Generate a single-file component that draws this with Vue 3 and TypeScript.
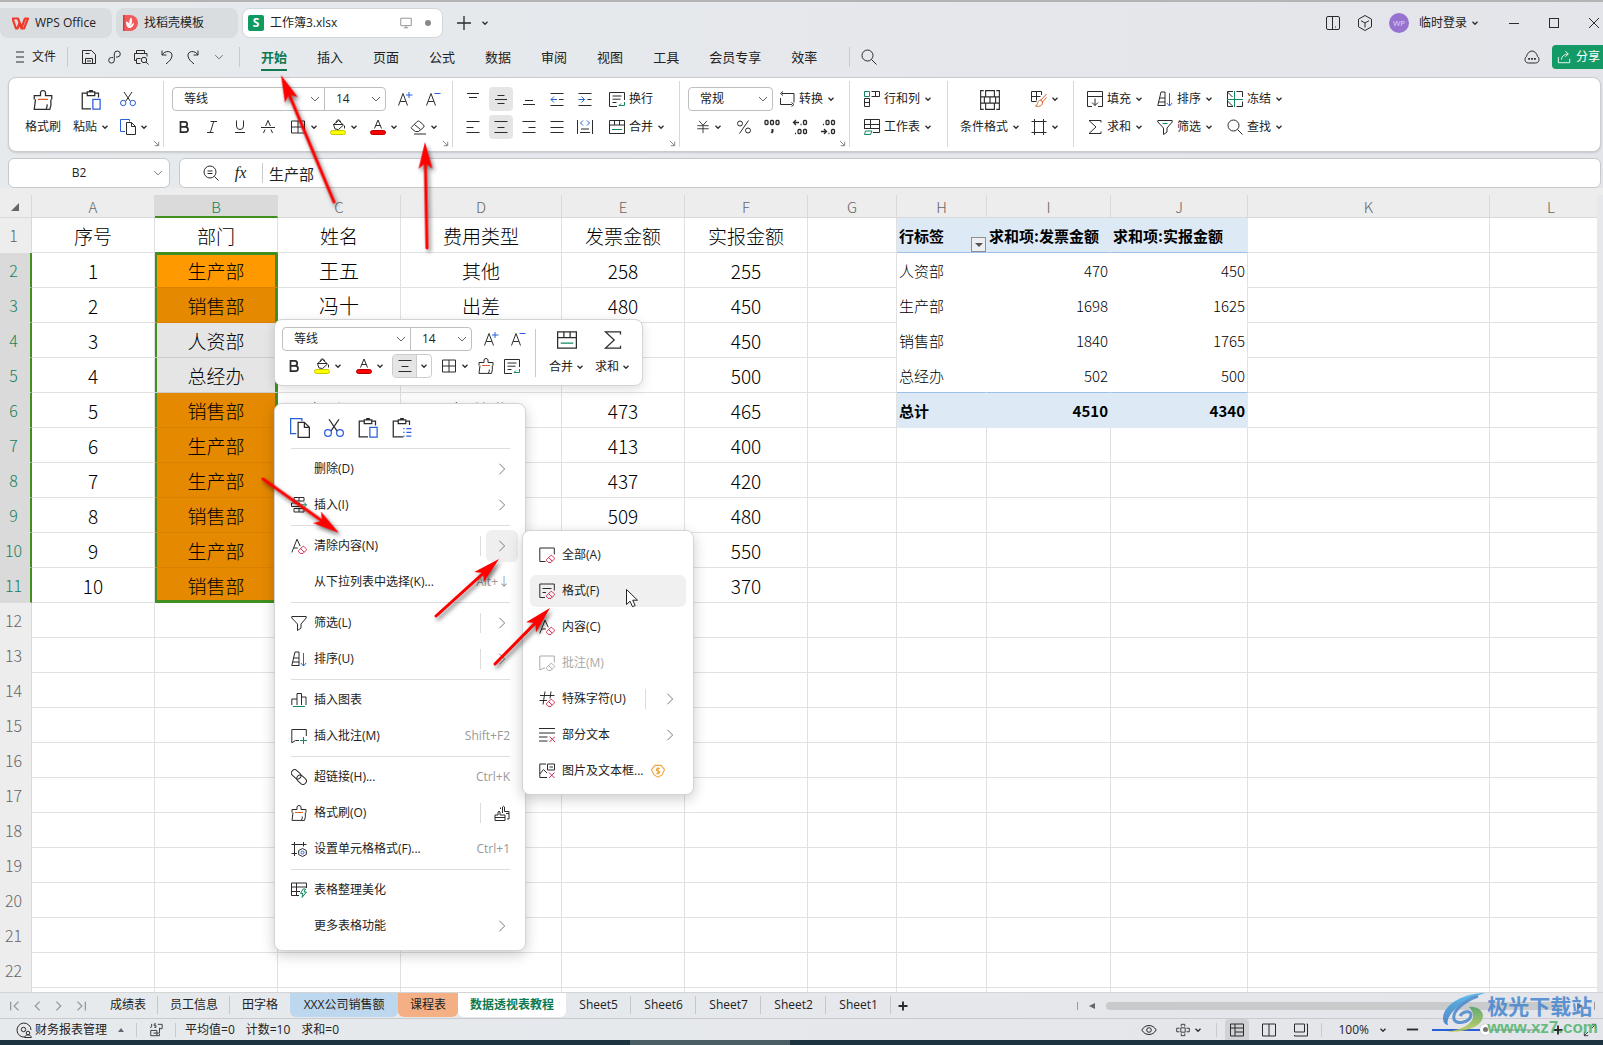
<script setup lang="ts">
import { h, ref } from 'vue'

const BLUE = '#2b5fd9'
const GREEN = '#0f8a5f'
const RED = '#d22c52'
const eraser = (c: string) =>
  `<path stroke="${c}" d="M7.500 12.700 11.500 8.700q.8-.8 1.600 0l2 2q.8.800 0 1.600L12 15.400H9.200L7.500 13.700zM9.700 10.700l3.400 3.300"/>`
const letterA = '<path d="M.8 14.500 6 1.200l3.200 7M2.800 10h4"/>'

const icons: Record<string, string> = {
  menu: '<path d="M4 3h8M4 8h8M4 13h8"/>',
  save: '<path d="M1.500 1.500h9l4 4v9h-13zM4.500 14.500v-5h7v5M4.500 4.500h4M6 12h4"/>',
  swirl: '<path d="M6 8.500H4.500a2.800 2.800 0 1 0 2.800 2.800V4.800A3 3 0 1 1 10.500 8H9"/>',
  print: '<path d="M3.500 4.500v-3h8v3M3 11.500H1.500v-7h12.500v3M3.500 10v4.500h4M3.500 9.500h4"/><circle cx="11" cy="11" r="2.700"/><path d="m13 13 2.500 2.500"/>',
  undo: '<path d="M3 1.500v4.500h4.500M3 6c3-5 10.500-4.500 10 1-.3 3-3 5.500-6 8"/>',
  redo: '<path d="M13 1.500v4.500H8.500M13 6c-3-5-10.500-4.500-10 1 .3 3 3 5.500 6 8"/>',
  search: '<circle cx="6.500" cy="6.500" r="5.500"/><path d="m10.500 10.500 5 5"/>',
  zoomout: '<circle cx="7" cy="7" r="6"/><path d="m11.500 11.500 4 4M4.500 6h5M4.500 8.500h5"/>',
  panel: '<rect x="1.500" y="1.500" width="13" height="13" rx="1.500"/><path d="M7.500 1.500v13M10.500 11.500v1"/>',
  cube: '<path d="m8 .5 6.500 3.700v7.600L8 15.500l-6.500-3.700V4.200zM4 5.700l4 2.300 4-2.300M8 8v4.500"/>',
  minimize: '<path d="M3 8.500h10"/>',
  maximize: '<rect x="3.500" y="3.500" width="9" height="9"/>',
  close: '<path d="m3 3 10 10M13 3 3 13"/>',
  cloud: '<path d="M4.500 14C.5 14 0 9 2.500 7.500 3 4.500 5.500 2 8 2s5 2.500 5.500 5.500C16 9 15.500 14 11.500 14z"/><path stroke-width="1.800" d="M4.200 9.800H6M7.100 9.800h1.800M10 9.800h1.800"/>',
  share: '<path d="M1.500 8v6.500h13V10M5 11c.5-4 3-6 7.500-6.500M9.500 1.500l3.500 3-3.500 3.200"/>',
  brush: '<path d="M1 7.500V4.500h5V2q.3-1.500 2-1.500t2 1.500v2.500h5v3M2 7.500 1 15.400h12.500q1.300-3 .8-7.900M10.500 15q1-1.500.8-3.500"/><path stroke="#d9622b" d="M4 7.500h8"/>',
  paste: '<path d="M5 2.500H1v12.500H8M11 2.500h3v3.500M5 1.500h6v3H5zM7 1.500V.5h2v1"/><rect stroke="#2b5fd9" x="9.500" y="7.500" width="5.800" height="7.800"/>',
  pastelist: `<path d="M5 2.500H1v12.500H9M11 2.500h3v3M5 1.500h6v3H5zM7 1.500V.5h2v1"/><path stroke="${BLUE}" d="M9 8.500h1M11.500 8.500h4M9 11.500h1M11.500 11.500h4M9 14.500h1M11.500 14.500h4"/>`,
  cut: `<path d="M4 1 10.500 10.500M12 1 5.500 10.500"/><g stroke="${BLUE}"><circle cx="3.200" cy="12" r="2.700"/><circle cx="12.800" cy="12" r="2.700"/></g>`,
  copy: `<path stroke="${BLUE}" d="M5 12.500H.5V.5h9v2"/><path d="M6.500 3.500h5l4 4v8h-9zM11.500 3.500v4h4"/>`,
  fontup: `<path d="m1.500 14.500 4.500-12 4.500 12M3.200 10.500h5.600"/><path stroke="${BLUE}" d="M12 1v6M9 4h6.500"/>`,
  fontdown: `<path d="m1.500 14.500 4.500-12 4.500 12M3.200 10.500h5.600"/><path stroke="${BLUE}" d="M9.500 2.500h6"/>`,
  bold: '<path stroke-width="1.700" d="M4.500 2.800h4.200a2.500 2.500 0 0 1 0 5H4.500zM4.500 7.800h4.800a2.700 2.700 0 0 1 0 5.400H4.500z"/>',
  italic: '<path d="M6.500 2.500h6.500M3 13.500h6.500M9.700 2.500l-3.400 11"/>',
  underline: '<path d="M4.500 1.500v5.500a3.500 3.500 0 0 0 7 0V1.500M3 13.500h10"/>',
  strike: '<path d="M1 8.500h14M5.600 7 8 1.500 10.400 7M3.500 14l1.500-3.500M12.500 14 11 10.500"/>',
  borders: '<path d="M1.500 2h13v12h-13zM8 2v12M1.500 8h13"/>',
  fill: '<path d="m3.500 5.500 5-4 5 4.500-5 4.500-3.500-.5zM3.500 5.500h9.500M6.500 4c-1-3.500 3.500-4.500 4-1"/><path d="M14.500 6.500v3"/><rect x=".5" y="11.500" width="15" height="4" rx="2" fill="#ffff00" stroke="#c9c900"/>',
  fontcolor: '<path d="m4.500 9.500 3.500-8.500 3.500 8.500M5.700 6.500h4.600"/><rect x=".5" y="11.500" width="15" height="4" rx="2" fill="#f00" stroke="#b80000"/>',
  eraser: '<path d="m1.200 8.500 6-6q1.200-1 2.400 0l4 3.500q1 1.200 0 2.400L8.500 12.500H5.500l-4-3zM4.500 5.500l6 5M4 15h12"/>',
  altop: '<path d="M2 2.500h12M4 6.500h8"/>',
  almid: '<path d="M4.500 4.500h7M2 8.500h12M4.500 12.500h7"/>',
  albot: '<path d="M4 9.500h8M2 13.500h12"/>',
  outdent: `<path d="M1.500 2.500h13M10 8.500h4.500M1.500 14.500h13"/><path stroke="${BLUE}" d="M8 8.500H2M5 5.500 2 8.500l3 3"/>`,
  indent: `<path d="M1.500 2.500h13M10.500 8.500h4M1.500 14.500h13"/><path stroke="${BLUE}" d="M1.500 8.500h6M4.500 5.500l3 3-3 3"/>`,
  alleft: '<path d="M1.500 2.500h13M1.500 8.500h7M1.500 13.500h13"/>',
  alcenter: '<path d="M1.500 2.500h13M4.500 8.500h7M1.500 13.500h13"/>',
  alright: '<path d="M1.500 2.500h13M7.500 8.500h7M1.500 13.500h13"/>',
  aljust: '<path d="M1.500 2.500h13M1.500 8.500h13M1.500 13.500h13"/>',
  distrib: `<path d="M.5 1v14M15.500 1v14M4 10h8M3 13.500h10"/><path stroke="${BLUE}" d="M6 1.500 3.500 4 6 6.500M10 1.500 12.500 4 10 6.500"/>`,
  wrap: `<path d="M8 15.500H.5V1.500h15V9M3.500 5h9M3.500 8.200h8M3.500 11.500h4"/><path stroke="${GREEN}" d="M15.500 11v3.500H10M12 12.500l-2 2"/>`,
  merge: `<path d="M.5 1.500h15v13H.5zM.5 6h15M5.500 1.500V6M10.500 1.500V6"/><path stroke="${GREEN}" d="M3 10.500h10"/>`,
  convert: '<path d="M3 2.500h12v9M4 .5l-2.500 2L4 4.500M13 13.500H1.500V7M12.500 11.500l2.500 2-2.500 2"/>',
  yen: '<path d="M3.500 1 8 6l4.500-5M1.500 6.500h13M1.500 10h13M8 6v9"/>',
  percent: '<circle cx="4" cy="4.500" r="2.500"/><circle cx="12" cy="11.500" r="2.500"/><path d="M12.500 1.500 3.500 14.500"/>',
  comma: '<g stroke-width="1.300"><rect x="1" y="1.500" width="3" height="4" rx="1"/><rect x="6.500" y="1.500" width="3" height="4" rx="1"/><rect x="12" y="1.500" width="3" height="4" rx="1"/><path stroke-width="2" d="M8.500 10v2.500L7.500 14"/></g>',
  decup: '<g stroke-width="1.300"><path d="M7 3.500H1.500M4 1 1.500 3.500 4 6M8.500 5.500h1M3 14.500h1"/><rect x="11.500" y="1.500" width="3" height="4" rx="1"/><rect x="6" y="10.500" width="3" height="4" rx="1"/><rect x="11.500" y="10.500" width="3" height="4" rx="1"/></g>',
  decdown: '<g stroke-width="1.300"><path d="M1 12.500h5.500M4 10l2.500 2.500L4 15M3 5.500h1M8.500 14.500h1"/><rect x="6" y="1.500" width="3" height="4" rx="1"/><rect x="11.500" y="1.500" width="3" height="4" rx="1"/><rect x="11.500" y="10.500" width="3" height="4" rx="1"/></g>',
  rowscols: `<path d="M7.500.5h8v5h-8M11.500.5v5M.5 7.500h5v8h-5zM.5 11.500h5"/><path stroke="${GREEN}" d="M.5.5h5v5h-5z"/>`,
  worksheet: `<path d="M9 13.500h6.500V.5H.5V10M.5 5.500h15M6.500.5V10M.5 9.500h15"/><path stroke="${GREEN}" d="M1.500 12h6.500l-1.500 3.500H.5z"/>`,
  cond: '<path stroke-width=".9" d="M3 .5H.5v15H3M13 .5h2.500v15H13M.5 5.500h2.500M.5 10.500H3M13 5.500h2.500M13 10.500h2.500M4.500.5h7v5h-7zM4.500 10.500h7v5h-7zM3.500 5.500h9v5h-9zM8 5.500v5"/>',
  tblstyle: '<path d="M5.500 10.500h-5V.5h10v3.500M.5 5.500h9M5.500.5v9"/><path stroke="#d9622b" d="m15.500 3-6 6.500M15.500 6.500l-4.500 5M10 9c-4 0-2.500 4.500-5.500 6 4 1 7.500-.5 7-4z"/>',
  frame: '<path d="M3.500 0v16M12.500 0v16M.5 2.500h15M.5 13.500h15"/>',
  filldown: '<path d="M5 15.500H.5V.5h15v15H11M.5 5.500h15M8 7.500v7M5 11.500l3 3 3-3"/>',
  sort: `<path d="M4 1h4v14M4 1 .8 14.500H8M2.500 7H8M1.600 11H8"/><path stroke="${BLUE}" d="M12.500 2v13M9.800 12l2.700 3 2.700-3"/>`,
  freeze: `<path d="M6 .5H.5v15H6M9.500.5h6v5.500M15.500 10.500v5h-6M.5 1l5 5M.5 10l5 5"/><path stroke="${GREEN}" d="M7.500 0v16M0 8.500h16"/>`,
  sum: '<path d="M14 3.500v-2H2L9 8l-7 6.500h12v-2"/>',
  filter: '<path d="M.8 1.500h14.400v1.500L10 9v4l-3.500 2.500V9L.8 3z"/>',
  filterg: `<path d="M.8 1.500h14.400v1.500L10 9v4l-3.500 2.500V9L.8 3z"/><path stroke="${GREEN}" d="M5.500 4.500h5"/>`,
  chev: '<path stroke-width="2.600" d="m3 5.500 5 5 5-5"/>',
  thin: '<path d="m2 5 6 6 6-6"/>',
  right: '<path stroke="#666" d="m5 2 6 6-6 6"/>',
  launcher: '<path stroke="#777" stroke-width="2" d="m2 2 10 10M13 4v9H4"/>',
  insert: `<path d="M3 .5h10v3.500H3zM.5 6h8v3.500h-8zM3 11.500h10V15H3zM8 .5V4M8 11.500V15"/><path stroke="${GREEN}" d="M10 7.800h5.500M13 5.300l2.500 2.500-2.500 2.500"/>`,
  clear: letterA + eraser(RED),
  chart: `<path d="M.8 13V7H6V13M6 7V1.500h4.500V13M10.500 5H15V13"/><path stroke="${GREEN}" d="M2 14.500h12"/>`,
  note: `<path d="M8 12.500H4.500L.8 14.800V1.500h14.500v6.500"/><path stroke="${GREEN}" d="M12.500 9v7M9 12.500h7"/>`,
  link: '<rect x="0" y="2.500" width="10.500" height="6.500" rx="3.200" transform="rotate(42 5.700 5.500)"/><rect x="5.500" y="7.500" width="10.500" height="6.500" rx="3.200" transform="rotate(42 10.700 10.500)"/>',
  multi: '<path d="M1 15.500V10H4V7q1-1.500 2 0v3h5v5.500zM1 12.500h10M8.500 8V2q1-1.500 2 0v4.500h4.500v7.500H13M12 8.500h3M6.500 4V2.500"/>',
  cellfmt: `<path d="M3.500 1v14M.5 3.500h15M12.500 1v4.500M.5 12.500H6"/><path d="m11.500 7.500 3.800 2v4l-3.800 2-3.800-2v-4z"/><circle cx="11.500" cy="11.500" r="1.500" stroke="${BLUE}"/>`,
  beautify: `<path d="M8 13.500H.5V1h15v5M.5 5h15M.5 9.500H9M5.500 1v12.500"/><path stroke="${GREEN}" d="M12 7 9.500 11.500h2.500l-1 4 4.500-5.500h-2.500l1.500-3z"/>`,
  clrall: '<path d="M6.500 14.500H.8V1h14.500v6.500"/>' + eraser(RED),
  clrfmt: '<path d="M6 14.500H.8V1h14.500v6.500M3.500 5.500h9M3.500 9.500h3.500"/>' + eraser(RED),
  clrnote: '<path stroke="#aaa" d="M6 13H5L.8 15V1h14.500v6.500"/>' + eraser('#aaa'),
  clrhash: '<path d="M6 .5 4 13.500M12 .5l-1 7M1 4.500h14.500M.5 9.500H8"/>' + eraser(RED),
  clrtext: `<path d="M0 1.500h16M0 6h16M0 10h8.500M0 14h8.500"/><path stroke="${RED}" d="m10.500 9.500 5.500 5.500M16 9.500 10.500 15"/>`,
  clrpic: `<path d="M8 14.500H.8V1H7M.8 11l3.700-4.500 3.500 3.500M8.500 1h7v6h-7zM10.500 4h3.500"/><path stroke="${RED}" d="m10 9.500 5.500 5.500M15.500 9.500 10 15"/>`,
  coin: '<path stroke="#f0a63c" stroke-width="1.300" d="M4.500 1.500h7l4 5-3 6L8 15l-4.500-2.500-3-6zM10 5H7L6 7l4 2-1 1.800H6M8 4v8"/>',
  first: '<path stroke="#999" stroke-width="1.500" d="M3 3v10M12 3 7 8l5 5"/>',
  prev: '<path stroke="#999" stroke-width="1.500" d="m11 3-5 5 5 5"/>',
  next: '<path stroke="#999" stroke-width="1.500" d="m5 3 5 5-5 5"/>',
  last: '<path stroke="#999" stroke-width="1.500" d="M13 3v10M4 3l5 5-5 5"/>',
  plus: '<path stroke-width="1.500" d="M8 0v16M0 8h16"/>',
  plusb: '<path stroke-width="2.500" d="M8 2v12M2 8h12"/>',
  minusb: '<path stroke-width="2" d="M2 8h12"/>',
  finance: '<path d="M9 15A7 7 0 1 1 15 8"/><circle cx="7.500" cy="7.500" r="2.200"/><circle cx="12" cy="11" r="1.800"/><path d="M8.800 15.500c0-3.500 6.500-3.500 6.500 0z"/>',
  js: '<path d="M3 1v3.500q-1 1.500-2 0M8 1H6v2h2v2H6M10 1.500h5v5h-3M2 8.500h7v6H2zM5 11.500h7v-6M9 14.500h3v-2"/>',
  eye: '<path d="M.8 8C4 2 12 2 15.200 8 12 14 4 14 .8 8z"/><circle cx="8" cy="8" r="2.300"/>',
  focus: '<path d="M6 4V1.500h4V4M6 12v2.500h4V12M4 6H.8v4H4M12 6h3.200v4H12M5.500 5.500h5v5h-5z"/>',
  vnormal: '<path d="M1.500 2h13v12h-13zM1.500 6h13M6 2v12M6 10h8"/>',
  vpage: '<path d="M1.500 2h13v12h-13zM8 2v12"/>',
  vbreak: '<path d="M1.500 2h10v8h-10zM13.500 2h1v12h-13v-1"/>',
  full: '<path d="M10 1.500h4.500V6M14.500 1.500 10 6M6 14.500H1.500V10M1.500 14.500 6 10"/>',
  monitor: '<path stroke="#888" d="M2 2.500h12v8.500H2zM5.500 13.500h5M8 11v2.500"/>',
}

const Icon = (p: { n: string; s?: number }) =>
  h('svg', {
    class: 'icon',
    viewBox: '0 0 16 16',
    width: p.s ?? 16,
    height: p.s ?? 16,
    'aria-hidden': 'true',
    innerHTML: icons[p.n],
  })
Icon.props = ['n', 's']

const menus = ['开始', '插入', '页面', '公式', '数据', '审阅', '视图', '工具', '会员专享', '效率']
const quick = ['save', 'swirl', 'print', 'undo', 'redo', 'thin']
const fontName = ref('等线')
const fontSize = ref('14')
const numFmt = ref('常规')
const cellRef = ref('B2')
const formula = ref('生产部')
const zoom = ref(49)

const cols = [
  { id: 'A', w: 123 }, { id: 'B', w: 123 }, { id: 'C', w: 123 }, { id: 'D', w: 161 },
  { id: 'E', w: 123 }, { id: 'F', w: 123 }, { id: 'G', w: 89 }, { id: 'H', w: 90 },
  { id: 'I', w: 124 }, { id: 'J', w: 137 }, { id: 'K', w: 242 }, { id: 'L', w: 0 },
]
const data: string[][] = [
  ['序号', '部门', '姓名', '费用类型', '发票金额', '实报金额', '', '行标签', '求和项:发票金额', '求和项:实报金额'],
  ['1', '生产部', '王五', '其他', '258', '255', '', '人资部', '470', '450'],
  ['2', '销售部', '冯十', '出差', '480', '450', '', '生产部', '1698', '1625'],
  ['3', '人资部', '', '', '', '450', '', '销售部', '1840', '1765'],
  ['4', '总经办', '', '', '', '500', '', '总经办', '502', '500'],
  ['5', '销售部', '杨小罗', '招待费', '473', '465', '', '总计', '4510', '4340'],
  ['6', '生产部', '', '', '413', '400'],
  ['7', '生产部', '', '', '437', '420'],
  ['8', '销售部', '', '', '509', '480'],
  ['9', '生产部', '', '', '', '550'],
  ['10', '销售部', '', '', '', '370'],
]
const cellClass = (r: number, c: number) => {
  const k: string[] = []
  if (c === 1 && r >= 2 && r <= 11) {
    k.push('sel')
    if (r === 2) k.push('active')
    else if (r === 4 || r === 5) k.push('grey')
    if (r === 11) k.push('end')
  }
  if (c === 1 && r === 1) k.push('above')
  if (c === 2 && (r === 2 || r === 3)) k.push('light')
  if (c >= 7 && c <= 9 && r <= 6) {
    k.push('pivot')
    if (r === 1 || r === 6) k.push('band')
    if (r === 1 || r === 5) k.push('rule')
    if (c > 7 && r > 1) k.push('num')
    if (c === 9 && r !== 1 && r !== 6) k.push('edge')
  }
  if (c === 6 && r <= 6) k.push('edge')
  return k
}

interface Item { t?: string; i?: string; key?: string; arrow?: boolean; split?: boolean; hot?: boolean; multi?: boolean; off?: boolean; coin?: boolean }
const menuItems: Item[] = [
  {},
  { t: '删除(D)', arrow: true },
  { t: '插入(I)', i: 'insert', arrow: true },
  {},
  { t: '清除内容(N)', i: 'clear', arrow: true, split: true, hot: true },
  { t: '从下拉列表中选择(K)...', key: 'Alt+↓' },
  {},
  { t: '筛选(L)', i: 'filter', arrow: true, split: true },
  { t: '排序(U)', i: 'sort', arrow: true, split: true },
  {},
  { t: '插入图表', i: 'chart' },
  { t: '插入批注(M)', i: 'note', key: 'Shift+F2' },
  {},
  { t: '超链接(H)...', i: 'link', key: 'Ctrl+K' },
  { t: '格式刷(O)', i: 'brush', split: true, multi: true },
  { t: '设置单元格格式(F)...', i: 'cellfmt', key: 'Ctrl+1' },
  {},
  { t: '表格整理美化', i: 'beautify' },
  { t: '更多表格功能', arrow: true },
]
const subItems: Item[] = [
  { t: '全部(A)', i: 'clrall' },
  { t: '格式(F)', i: 'clrfmt', hot: true },
  { t: '内容(C)', i: 'clear' },
  { t: '批注(M)', i: 'clrnote', off: true },
  { t: '特殊字符(U)', i: 'clrhash', arrow: true, split: true },
  { t: '部分文本', i: 'clrtext', arrow: true },
  { t: '图片及文本框...', i: 'clrpic', coin: true },
]
const sheets = [
  { t: '成绩表' }, { t: '员工信息' }, { t: '田字格', k: 'plain' }, { t: 'XXX公司销售额', k: 'blue' },
  { t: '课程表', k: 'orange' }, { t: '数据透视表教程', k: 'current' },
  { t: 'Sheet5' }, { t: 'Sheet6' }, { t: 'Sheet7' }, { t: 'Sheet2' }, { t: 'Sheet1' },
]

// Callout arrows: tail point, then tip point
const arrows = [
  [334, 202, 281, 75],
  [427, 248, 425, 142],
  [263, 479, 339, 533],
  [436, 616, 499, 559],
  [495, 664, 550, 608],
].map(([x1, y1, x2, y2]) => ({
  len: Math.hypot(x2 - x1, y2 - y1),
  at: `translate(${x2} ${y2}) rotate(${(Math.atan2(y2 - y1, x2 - x1) * 180) / Math.PI})`,
}))
</script>

<template>
  <div class="app">
    <header class="titlebar">
      <button class="doc home">
        <svg width="17" height="13" viewBox="0 0 17 13"><path fill="none" stroke="#ee3a2c" stroke-width="2.200" stroke-linejoin="round" d="M.5 1.500H6l3.500 9L13 1.500h3L12 11.500H9.500L7.500 6 5.500 11.500H4z" /></svg>
        WPS Office
      </button>
      <button class="doc template">
        <svg width="16" height="16" viewBox="0 0 16 16"><path fill="#f05a5a" d="M1 0h7a7 7 0 0 1 0 16H1z" /><path fill="#d93a3a" d="M1 0h1.500v16H1z" /><path fill="#fff" d="M9 2.500c2 3 1 6-.5 8C6.500 9 7 5 9 2.500zM4 6.500c2.500.5 3.500 2 4 4.500l4-3.500c0 3-2 5.500-4.500 5.500S4 9.500 4 6.500z" /></svg>
        找稻壳模板
      </button>
      <button class="doc current-doc">
        <span class="sheet-logo">S</span>
        工作簿3.xlsx
        <span class="doc-tail"><Icon n="monitor" :s="14" /><i class="dot"></i></span>
      </button>
      <button class="bare add" aria-label="新建"><Icon n="plus" :s="14" /></button>
      <button class="bare" aria-label="更多"><Icon n="chev" :s="8" /></button>
      <div class="window-tools">
        <button class="bare" aria-label="侧栏"><Icon n="panel" /></button>
        <button class="bare" aria-label="应用"><Icon n="cube" /></button>
        <button class="bare account"><span class="avatar">WP</span>临时登录<Icon n="chev" :s="8" /></button>
        <button class="bare win" aria-label="最小化"><Icon n="minimize" /></button>
        <button class="bare win" aria-label="最大化"><Icon n="maximize" /></button>
        <button class="bare win" aria-label="关闭"><Icon n="close" /></button>
      </div>
    </header>

    <nav class="menubar">
      <button class="bare file"><Icon n="menu" />文件</button>
      <i class="bar"></i>
      <div class="quick">
        <button v-for="q in quick" :key="q" class="bare" :aria-label="q"><Icon :n="q" :s="q === 'thin' ? 10 : 16" /></button>
      </div>
      <i class="bar"></i>
      <div class="tabs">
        <button v-for="(m, i) in menus" :key="m" class="bare tab" :class="{ on: i === 0 }">{{ m }}</button>
      </div>
      <i class="bar far"></i>
      <button class="bare find" aria-label="搜索"><Icon n="search" /></button>
      <div class="share-box">
        <button class="bare" aria-label="云"><Icon n="cloud" /></button>
        <button class="share"><Icon n="share" :s="14" />分享</button>
      </div>
    </nav>

    <section class="ribbon">
      <div class="group clip">
        <button class="tall"><Icon n="brush" :s="20" /><span>格式刷</span></button>
        <button class="tall"><Icon n="paste" :s="20" /><span>粘贴<Icon n="chev" :s="8" /></span></button>
        <div class="rows">
          <div class="row"><button class="ib" aria-label="剪切"><Icon n="cut" /></button></div>
          <div class="row"><button class="split" aria-label="复制"><Icon n="copy" /><Icon n="chev" :s="8" /></button></div>
        </div>
        <Icon n="launcher" :s="7" class="launch" />
      </div>
      <div class="group font">
        <div class="rows">
          <div class="row">
            <div class="combo">
              <select v-model="fontName" class="fname" aria-label="字体"><option>等线</option></select>
              <select v-model="fontSize" class="fsize" aria-label="字号"><option>14</option></select>
            </div>
            <button class="ib push" aria-label="增大字号"><Icon n="fontup" /></button>
            <button class="ib" aria-label="减小字号"><Icon n="fontdown" /></button>
          </div>
          <div class="row">
            <button v-for="n in ['bold', 'italic', 'underline', 'strike']" :key="n" class="ib" :aria-label="n"><Icon :n="n" /></button>
            <button v-for="n in ['borders', 'fill', 'fontcolor', 'eraser']" :key="n" class="split" :aria-label="n"><Icon :n="n" /><Icon n="chev" :s="8" /></button>
          </div>
        </div>
        <Icon n="launcher" :s="7" class="launch" />
      </div>
      <div class="group align">
        <div class="rows">
          <div class="row">
            <button v-for="n in ['altop', 'almid', 'albot', 'outdent', 'indent']" :key="n" class="ib" :class="{ pressed: n === 'almid' }" :aria-label="n"><Icon :n="n" /></button>
            <button class="lab wide"><Icon n="wrap" />换行</button>
          </div>
          <div class="row">
            <button v-for="n in ['alleft', 'alcenter', 'alright', 'aljust', 'distrib']" :key="n" class="ib" :class="{ pressed: n === 'alcenter' }" :aria-label="n"><Icon :n="n" /></button>
            <button class="lab wide"><Icon n="merge" />合并<Icon n="chev" :s="8" /></button>
          </div>
        </div>
        <Icon n="launcher" :s="7" class="launch" />
      </div>
      <div class="group number">
        <div class="rows">
          <div class="row">
            <div class="combo"><select v-model="numFmt" class="nfmt" aria-label="数字格式"><option>常规</option></select></div>
            <button class="lab wide"><Icon n="convert" />转换<Icon n="chev" :s="8" /></button>
          </div>
          <div class="row">
            <button class="split yen" aria-label="货币"><Icon n="yen" :s="14" /><Icon n="chev" :s="8" /></button>
            <button v-for="n in ['percent', 'comma', 'decup', 'decdown']" :key="n" class="ib" :aria-label="n"><Icon :n="n" /></button>
          </div>
        </div>
        <Icon n="launcher" :s="7" class="launch" />
      </div>
      <div class="group sheet">
        <div class="rows">
          <div class="row"><button class="lab"><Icon n="rowscols" />行和列<Icon n="chev" :s="8" /></button></div>
          <div class="row"><button class="lab"><Icon n="worksheet" />工作表<Icon n="chev" :s="8" /></button></div>
        </div>
      </div>
      <div class="group style">
        <button class="tall"><Icon n="cond" :s="20" /><span>条件格式<Icon n="chev" :s="8" /></span></button>
        <div class="rows">
          <div class="row"><button class="split" aria-label="表格样式"><Icon n="tblstyle" /><Icon n="chev" :s="8" /></button></div>
          <div class="row"><button class="split" aria-label="单元格样式"><Icon n="frame" /><Icon n="chev" :s="8" /></button></div>
        </div>
      </div>
      <div class="group edit">
        <div class="rows">
          <div class="row">
            <button class="lab"><Icon n="filldown" />填充<Icon n="chev" :s="8" /></button>
            <button class="lab"><Icon n="sort" />排序<Icon n="chev" :s="8" /></button>
            <button class="lab"><Icon n="freeze" />冻结<Icon n="chev" :s="8" /></button>
          </div>
          <div class="row">
            <button class="lab"><Icon n="sum" />求和<Icon n="chev" :s="8" /></button>
            <button class="lab"><Icon n="filterg" />筛选<Icon n="chev" :s="8" /></button>
            <button class="lab"><Icon n="search" />查找<Icon n="chev" :s="8" /></button>
          </div>
        </div>
      </div>
    </section>

    <section class="formula">
      <div class="field name"><input v-model="cellRef" aria-label="名称框" /><Icon n="thin" :s="10" /></div>
      <div class="field expr">
        <Icon n="zoomout" /><span class="fx">fx</span><i class="bar"></i>
        <input v-model="formula" aria-label="编辑栏" />
      </div>
    </section>

    <main class="grid">
      <table>
        <colgroup>
          <col class="c-head" />
          <col v-for="c in cols" :key="c.id" :style="c.w ? { width: c.w + 'px' } : {}" />
        </colgroup>
        <thead>
          <tr>
            <th class="corner"><svg width="8" height="8" viewBox="0 0 8 8"><path fill="#666" d="M8 0v8H0z" /></svg></th>
            <th v-for="c in cols" :key="c.id" :class="{ picked: c.id === 'B' }">{{ c.id }}</th>
          </tr>
        </thead>
        <tbody>
          <tr v-for="r in 23" :key="r">
            <th :class="{ picked: r >= 2 && r <= 11 }">{{ r <= 22 ? r : '' }}</th>
            <td v-for="(c, ci) in cols" :key="c.id" :class="cellClass(r, ci)">
              {{ data[r - 1]?.[ci] ?? '' }}<button v-if="r === 1 && ci === 7" class="drop" aria-label="筛选行标签"><svg width="8" height="4" viewBox="0 0 8 4"><path fill="#555" d="M0 0h8L4 4z" /></svg></button>
            </td>
          </tr>
        </tbody>
      </table>
      <div class="vscroll"></div>
    </main>

    <footer>
      <div class="sheetbar">
        <div class="nav">
          <button v-for="n in ['first', 'prev', 'next', 'last']" :key="n" class="bare" :aria-label="n"><Icon :n="n" :s="14" /></button>
        </div>
        <button v-for="s in sheets" :key="s.t" class="stab" :class="s.k">{{ s.t }}</button>
        <button class="bare plus" aria-label="新建工作表"><Icon n="plusb" :s="12" /></button>
        <div class="hscroll">
          <i class="tick"></i>
          <svg width="6" height="6" viewBox="0 0 6 6"><path fill="#666" d="M6 0v6L0 3z" /></svg>
          <i class="track"></i>
          <svg width="6" height="6" viewBox="0 0 6 6"><path fill="#666" d="M0 0v6l6-3z" /></svg>
          <i class="tick"></i>
        </div>
      </div>
      <div class="status">
        <button class="bare fin"><Icon n="finance" />财务报表管理<svg width="6" height="4" viewBox="0 0 6 4"><path fill="#667" d="M0 4h6L3 0z" /></svg></button>
        <i class="bar"></i>
        <Icon n="js" :s="14" />
        <i class="bar"></i>
        <span class="stats"><span>平均值=0</span><span>计数=10</span><span>求和=0</span></span>
        <div class="view-tools">
          <button class="bare vb" aria-label="护眼"><Icon n="eye" /></button>
          <button class="bare focus" aria-label="阅读"><Icon n="focus" :s="14" /><Icon n="chev" :s="8" /></button>
          <i class="bar"></i>
          <button class="bare vb chosen" aria-label="普通视图"><Icon n="vnormal" /></button>
          <button class="bare vb" aria-label="页面布局"><Icon n="vpage" /></button>
          <button class="bare vb" aria-label="分页预览"><Icon n="vbreak" /></button>
          <i class="bar"></i>
          <button class="bare pct">100%<Icon n="chev" :s="8" /></button>
          <button class="bare" aria-label="缩小"><Icon n="minusb" :s="15" /></button>
          <input v-model="zoom" type="range" min="0" max="100" aria-label="缩放" />
          <button class="bare" aria-label="放大"><Icon n="plusb" :s="12" /></button>
          <button class="bare fullb" aria-label="全屏"><Icon n="full" :s="14" /></button>
        </div>
      </div>
      <div class="taskbar"><i></i></div>
    </footer>

    <div class="mini">
      <div class="rows">
        <div class="row">
          <div class="combo">
            <select v-model="fontName" class="mname" aria-label="字体"><option>等线</option></select>
            <select v-model="fontSize" class="fsize" aria-label="字号"><option>14</option></select>
          </div>
          <button class="ib push" aria-label="增大字号"><Icon n="fontup" /></button>
          <button class="ib near" aria-label="减小字号"><Icon n="fontdown" /></button>
        </div>
        <div class="row second">
          <button class="ib bold" aria-label="加粗"><Icon n="bold" /></button>
          <button class="split" aria-label="填充颜色"><Icon n="fill" /><Icon n="chev" :s="8" /></button>
          <button class="split" aria-label="字体颜色"><Icon n="fontcolor" /><Icon n="chev" :s="8" /></button>
          <span class="alignbox"><button class="pressed" aria-label="居中"><Icon n="alcenter" /></button><button aria-label="对齐选项"><Icon n="chev" :s="8" /></button></span>
          <button class="split" aria-label="边框"><Icon n="borders" /><Icon n="chev" :s="8" /></button>
          <button class="ib near" aria-label="格式刷"><Icon n="brush" /></button>
          <button class="ib near" aria-label="换行"><Icon n="wrap" /></button>
        </div>
      </div>
      <i class="bar"></i>
      <button class="tall"><Icon n="merge" :s="20" /><span>合并<Icon n="chev" :s="8" /></span></button>
      <button class="tall"><Icon n="sum" :s="20" /><span>求和<Icon n="chev" :s="8" /></span></button>
    </div>

    <div class="popup context">
      <div class="clips">
        <button v-for="n in ['copy', 'cut', 'paste', 'pastelist']" :key="n" class="bare" :aria-label="n"><Icon :n="n" :s="20" /></button>
      </div>
      <template v-for="(m, i) in menuItems" :key="i">
        <hr v-if="!m.t" />
        <button v-else class="item">
          <span class="gly"><Icon v-if="m.i" :n="m.i" /></span>
          <span class="txt">{{ m.t }}</span>
          <kbd v-if="m.key">{{ m.key }}</kbd>
          <i v-if="m.split" class="bar"></i>
          <span v-if="m.arrow" class="more" :class="{ hot: m.hot }"><Icon n="right" :s="14" /></span>
          <span v-if="m.multi" class="more"><Icon n="multi" /></span>
        </button>
      </template>
    </div>

    <div class="popup sub">
      <button v-for="m in subItems" :key="m.t" class="item" :class="{ hover: m.hot, off: m.off }">
        <span class="gly"><Icon v-if="m.i" :n="m.i" /></span>
        <span class="txt">{{ m.t }}</span>
        <Icon v-if="m.coin" n="coin" :s="14" />
        <i v-if="m.split" class="bar"></i>
        <span v-if="m.arrow" class="more"><Icon n="right" :s="14" /></span>
      </button>
    </div>

    <svg class="overlay">
      <g class="arrows">
        <g v-for="(a, i) in arrows" :key="i" :transform="a.at">
          <path :d="`M-18 0H${-a.len}`" stroke="#f00" stroke-width="3" stroke-linecap="round" />
          <path d="M0 0-27-7-21 0-27 7z" fill="#f00" />
        </g>
      </g>
      <path class="pointer" transform="translate(626 589)" d="M.5.5v15l3.500-3.300 2.500 5.500 2.700-1.200-2.500-5.300h4.800z" />
    </svg>

    <div class="mark">
      <svg width="44" height="42" viewBox="0 0 44 42">
        <defs>
          <linearGradient id="swoosh" x1="0" y1="0" x2="0" y2="1"><stop offset="0" stop-color="#45b5ea" /><stop offset="1" stop-color="#3b74c4" /></linearGradient>
          <linearGradient id="leaf" x1="0" y1="0" x2="0" y2="1"><stop offset="0" stop-color="#4aa35f" /><stop offset="1" stop-color="#c2cc55" /></linearGradient>
        </defs>
        <path fill="url(#swoosh)" d="M43 1C24 1 2 11 1 26c0 5 3 7 5 7-3-8 9-23 37-32z" />
        <path fill="url(#leaf)" d="M27 15c7-1 14 3 14 9C40 34 27 40 4 40c15-2 28-8 27-17-.4-3-2-6-4-8z" />
        <path fill="none" stroke="#4a86cc" stroke-width="3" d="M36 4C22 9 10 19 12 27c1 6 16 4 17-4 0-5-8-4-11 1" />
      </svg>
      <div class="mark-text"><strong>极光下载站</strong><a href="#">www.xz7.com</a></div>
    </div>
  </div>
</template>

<style>
body { margin: 0; overflow: hidden; }
</style>

<style scoped>
* { box-sizing: border-box; }
.app {
  position: relative; display: flex; flex-direction: column; height: 100vh; overflow: hidden;
  background: linear-gradient(90deg, #e6eaed, #e4e5ea); color: #222;
  font: 12px/16px "Open Sans", "Noto Sans CJK SC", sans-serif;
}
button, input, select { font: inherit; color: inherit; border: 0; padding: 0; margin: 0; background: none; outline: 0; }
.icon { fill: none; stroke: #2b2b2b; stroke-width: 1; flex: none; display: block; }
.bare { display: flex; align-items: center; justify-content: center; white-space: nowrap; }
.bar { width: 1px; height: 20px; background: #c8cacd; flex: none; }

.titlebar { display: flex; align-items: center; height: 44px; border-top: 2px solid #b4b4b4; flex: none; }
.doc { display: flex; align-items: center; height: 30px; border-radius: 8px; background: #dadde0; padding: 0 12px; gap: 6px; margin-right: 4px; white-space: nowrap; }
.home { width: 112px; border-top-left-radius: 0; }
.template { width: 122px; padding: 0 6px; }
.current-doc { width: 201px; background: #fff; padding: 0 5px; border: 1px solid #d3d5d8; margin-right: 0; }
.sheet-logo { width: 16px; height: 16px; background: #0f9a62; color: #fff; border-radius: 2px; font-weight: 700; text-align: center; }
.doc-tail { margin-left: auto; display: flex; align-items: center; gap: 12px; padding-right: 6px; }
.dot { width: 6px; height: 6px; border-radius: 3px; background: #888; }
.add { margin: 0 10px 0 14px; }
.window-tools { margin-left: auto; display: flex; align-items: center; gap: 16px; }
.account { gap: 4px; margin-right: 7px; }
.avatar { width: 20px; height: 20px; border-radius: 10px; background: #9673cf; color: #e0d3f5; font-size: 8px; line-height: 20px; text-align: center; margin-right: 6px; }
.win { width: 24px; }
.win:last-child { width: 16px; margin: 0 1px 0 4px; }

.menubar { display: flex; align-items: center; height: 26px; flex: none; }
.file { margin: 0 11px 0 12px; gap: 4px; }
.quick { display: flex; padding: 0 7px 0 8px; }
.quick .bare { width: 26px; }
.tabs { display: flex; gap: 30px; margin-left: 21px; font-size: 13px; }
.tab { position: relative; height: 26px; }
.tab.on { color: #0f7a50; font-weight: 700; }
.tab.on::after { content: ""; position: absolute; left: 0; right: 0; bottom: -1px; height: 2px; background: #0f7a50; }
.far { margin-left: 32px; }
.find { margin-left: 11px; }
.share-box { margin-left: auto; display: flex; gap: 12px; }
.share { display: flex; align-items: center; gap: 5px; height: 24px; width: 51px; padding-left: 5px; background: #149a66; color: #fff; border-radius: 4px 0 0 4px; white-space: nowrap; }
.share .icon { stroke: #fff; }

.ribbon { display: flex; flex: none; height: 75px; margin: 7px 2px 0 8px; padding-top: 3px; background: #fff; border: 1px solid #c9cbce; border-radius: 8px; box-shadow: 0 1px 2px #0002; }
.group { position: relative; display: flex; height: 66px; padding-top: 6px; border-right: 1px solid #d8d8d8; flex: none; }
.group:last-child { border: 0; }
.rows { display: flex; flex-direction: column; gap: 4px; }
.row { display: flex; align-items: center; height: 24px; }
.ib { display: flex; align-items: center; justify-content: center; width: 28px; height: 24px; }
.pressed { background: #e5e5e5; border-radius: 4px; }
.ib.pressed { width: 24px; margin: 0 2px; }
.split { display: flex; align-items: center; width: 40px; height: 24px; padding-left: 8px; gap: 4px; }
.lab { display: flex; align-items: center; gap: 4px; height: 24px; white-space: nowrap; }
.tall { display: flex; flex-direction: column; align-items: center; white-space: nowrap; }
.tall > .icon { margin: 3px 0 6px; }
.tall > span { display: flex; align-items: center; gap: 4px; line-height: 22px; }
.launch { position: absolute; right: 3px; bottom: 0; }
.combo { display: flex; height: 24px; border: 1px solid #bfbfbf; border-radius: 4px; overflow: hidden; background: #fff; }
.combo select {
  appearance: none; padding: 0 11px; height: 22px;
  background: url("data:image/svg+xml,%3Csvg xmlns='http://www.w3.org/2000/svg' width='10' height='10' fill='none' stroke='%23666'%3E%3Cpath d='m1 3 4 4 4-4'/%3E%3C/svg%3E") no-repeat right 4px center;
}
.fname { width: 152px; border-right: 1px solid #bfbfbf; }
.fsize { width: 60px; background-position: right 5px center; }
.nfmt { width: 83px; }
.mname { width: 128px; border-right: 1px solid #bfbfbf; }
.clip { width: 155px; padding-left: 16px; }
.clip .tall + .tall { margin-left: 12px; }
.clip .rows { margin-left: 3px; }
.clip .ib { padding-left: 4px; }
.font { width: 289px; padding-left: 6px; }
.font .combo { margin-left: 2px; }
.font .push { margin-left: 5px; }
.align { width: 227px; padding-left: 6px; }
.align .lab { margin-left: 10px; }
.number { width: 170px; padding-left: 8px; }
.number .lab { margin-left: 6px; }
.number .yen { width: 42px; }
.sheet { width: 98px; padding-left: 14px; }
.style { width: 126px; padding-left: 12px; }
.style .rows { margin-left: 3px; }
.edit { padding-left: 13px; }
.edit .lab { width: 70px; }

.formula { display: flex; flex: none; gap: 9px; height: 30px; margin: 6px 2px 0 8px; }
.field { display: flex; align-items: center; background: #fff; border: 1px solid #c6c8ca; border-radius: 6px; }
.name { width: 162px; padding-right: 6px; }
.name input { flex: 1; min-width: 0; text-align: center; padding-right: 4px; }
.expr { flex: 1; padding-left: 23px; gap: 12px; }
.expr input { flex: 1; font-size: 15px; margin-left: -6px; height: 24px; }
.fx { font: italic 16px/20px "Liberation Serif", serif; width: 19px; text-align: center; }

.grid { flex: 1 1 0; min-height: 0; overflow: hidden; display: flex; padding-top: 7px; background: #ededed; }
table { flex: none; width: calc(100% + 10px); margin-right: -16px; table-layout: fixed; border-collapse: separate; border-spacing: 0; background: #fff; align-self: flex-start; }
.c-head { width: 32px; }
th { background: #ededed; color: #666; border: solid #d9d9d9; border-width: 0 1px 1px 0; padding: 0; font-family: "Noto Sans CJK SC", sans-serif; font-weight: 300; }
thead th { height: 23px; padding-top: 1px; font-size: 15px; line-height: 18px; }
thead th.picked { background: #dadada; color: #17805a; border-bottom: 2px solid #41901f; padding-top: 2px; }
.corner svg { display: block; margin-left: 11px; }
tbody th { font-size: 16px; padding: 0 4px 0 0; border-bottom-color: #ededed; }
tbody th.picked { background: #dadada; color: #17805a; border-right: 2px solid #41901f; border-bottom-color: #dadada; padding-right: 3px; }
td { position: relative; height: 35px; padding: 1px 0 0; border: solid #e1e1e1; border-width: 0 1px 1px 0; text-align: center; color: #000; font: 300 19px/30px "Noto Sans CJK SC", sans-serif; white-space: nowrap; }
td.light { font-size: 20px; }
td.above { border-bottom-color: #41901f; }
td.sel { background: #e58900; border-bottom-color: #d98200; border-right: 1px solid #41901f; box-shadow: inset 2px 0 #41901f, inset -2px 0 #41901f; }
td.grey { background: #e5e5e5; border-bottom-color: #ccc; }
td.active { background: #f90; box-shadow: inset 2px 0 #41901f, inset -2px 0 #41901f, inset 0 2px #41901f; }
td.end { border-bottom-color: #41901f; box-shadow: inset 2px 0 #41901f, inset -2px 0 #41901f, inset 0 -2px #41901f; }
td.pivot { font-size: 15px; text-align: left; padding: 1px 2px 0; border-color: transparent; }
td.num { text-align: right; }
td.band { background: #ddeaf6; font-weight: 700; border-color: #ddeaf6; }
td.pivot.rule { border-bottom-color: #9bc2e6; }
td.pivot.edge { border-right-color: #e1e1e1; }
.drop { position: absolute; right: 0; bottom: 0; width: 15px; height: 15px; border: 1px solid #8c8f96; background: #eceef2; display: flex; align-items: center; justify-content: center; }
.vscroll { position: relative; width: 6px; flex: none; background: #e6e8eb; }

footer { flex: none; }
.sheetbar { display: flex; align-items: stretch; height: 26px; border-top: 1px solid #d2d4d6; }
.nav { display: flex; align-items: center; width: 98px; padding-left: 8px; gap: 8px; flex: none; }
.stab { position: relative; height: 24px; min-width: 59px; padding: 0 12px; white-space: nowrap; flex: none; }
.stab:not(.plain):not(.blue):not(.orange):not(.current)::after { content: ""; position: absolute; right: 0; top: 3px; height: 18px; width: 1px; background: #c5c8cb; }
.stab.blue { min-width: 108px; background: #bdd7ee; border-radius: 0 0 6px 6px; }
.stab.orange { background: #f4b084; border-radius: 0 0 6px 6px; }
.stab.current { background: #fff; color: #0f7a50; font-weight: 700; border-radius: 0 0 6px 6px; }
.stab.current ~ .stab { min-width: 65px; }
.plus { width: 24px; margin-right: auto; }
.hscroll { display: flex; align-items: center; gap: 11px; width: 526px; padding-right: 8px; }
.tick { width: 1px; height: 8px; background: #999; }
.track { flex: 1; height: 8px; border-radius: 4px; background: #c9cacc; }
.status { display: flex; align-items: center; height: 22px; border-top: 1px solid #c8cacd; padding-left: 16px; gap: 12px; }
.status .bar { height: 14px; }
.fin { gap: 3px; }
.fin svg:last-child { margin-left: 8px; }
.stats { display: flex; gap: 11px; margin-left: -3px; white-space: nowrap; }
.view-tools { margin-left: auto; display: flex; align-items: center; }
.vb { width: 24px; height: 21px; margin-right: 8px; }
.vb.chosen { background: #cfd1d4; border-radius: 4px 4px 0 0; }
.focus { gap: 4px; margin: 0 14px 0 7px; }
.view-tools .bar { margin-right: 8px; }
.view-tools .bar + .pct { margin-left: 8px; }
.pct { gap: 10px; margin-right: 18px; }
.view-tools input { appearance: none; width: 108px; height: 16px; margin: 0 12px; background: linear-gradient(90deg, #2b5fd9 50%, #b5b6bb 50%) center / 100% 2px no-repeat; }
.view-tools input::-webkit-slider-thumb { appearance: none; width: 11px; height: 11px; border-radius: 6px; border: 3px solid #fff; background: #777; box-shadow: 0 0 1px #888; }
.fullb { margin: 0 6px 0 19px; }
.taskbar { height: 5px; background: #1e3340; display: flex; }
.taskbar i { width: 160px; margin-left: 630px; background: #4b5e66; }

.mini { position: absolute; left: 274px; top: 319px; width: 369px; height: 67px; display: flex; padding: 7px; background: #fff; border: 1px solid #d4d4d4; border-radius: 8px; box-shadow: 0 3px 12px #0002; }
.mini .rows { width: 251px; gap: 3px; }
.mini .push { margin-left: 5px; }
.mini .near { width: 26px; }
.mini .bold { width: 24px; }
.mini .split { width: 42px; }
.mini .alignbox + .split { width: 40px; }
.mini .second { margin-right: -8px; }
.alignbox { display: flex; width: 40px; height: 24px; border: 1px solid #ccc; border-radius: 4px; flex: none; margin: 0 1px 0 2px; }
.alignbox button { display: flex; align-items: center; justify-content: center; flex: 1; }
.alignbox .pressed { flex: none; width: 24px; border-right: 1px solid #ccc; border-radius: 4px 0 0 4px; }
.mini .bar { height: 48px; margin: 2px 13px 0 2px; }
.mini .tall > .icon { margin: 3px 0 6px; }
.mini .tall > span { gap: 3px; }
.mini .tall + .tall { margin-left: 11px; }

.popup { position: absolute; background: #fff; border: 1px solid #d4d4d4; border-radius: 8px; box-shadow: 0 4px 14px #0003; padding: 6px 0; }
.context { left: 274px; top: 403px; width: 252px; }
.sub { left: 522px; top: 530px; width: 172px; padding: 5px 7px; }
.clips { display: flex; height: 36px; gap: 14px; padding-left: 15px; }
hr { margin: 2px 15px 2px 16px; border: 0; height: 1px; background: #dedede; }
.item { display: flex; align-items: center; width: 100%; height: 36px; padding: 0 15px 0 16px; white-space: nowrap; text-align: left; }
.gly { width: 23px; flex: none; }
.txt { margin-right: auto; }
kbd { font: inherit; color: #999; }
.item .bar { background: #dcdcdc; }
.more { display: flex; align-items: center; justify-content: center; width: 32px; height: 32px; margin: 0 -8px 0 5px; border-radius: 6px; }
.more.hot { background: #efefef; }
.sub .item { height: 32px; margin: 2px 0; padding: 0 8px 0 9px; border-radius: 6px; }
.sub .item:first-child { margin-top: 3px; }
.sub .item + .item { margin-top: 4px; }
.sub .bar { margin-right: 3px; }
.sub .hover { background: #f0f0f0; }
.sub .off { color: #aaa; }
.sub .item > .icon { margin-right: 13px; }

.overlay { position: absolute; left: 0; top: 0; width: 100%; height: 100%; pointer-events: none; }
.arrows { filter: drop-shadow(2px 3px 2px #0008); }
.pointer { fill: #fff; stroke: #222; }
.mark { position: absolute; right: 5px; bottom: 7px; display: flex; gap: 1px; opacity: .85; }
.mark-text { display: flex; flex-direction: column; white-space: nowrap; }
.mark strong { font: 700 21px/26px "Noto Sans CJK SC", sans-serif; color: #4585cf; }
.mark a { font: 700 17px/20px "Liberation Sans", sans-serif; color: #4fb56c; text-decoration: none; }
</style>
